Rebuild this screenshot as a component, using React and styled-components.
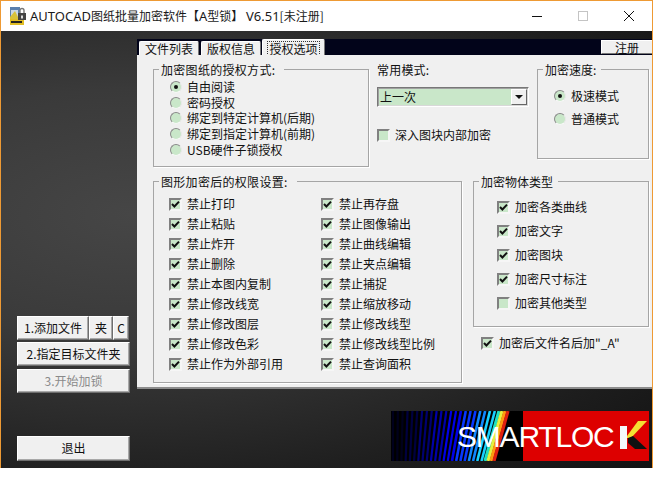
import React from "react";
import styled, { createGlobalStyle } from "styled-components";

const Global = createGlobalStyle`
  html, body { margin: 0; padding: 0; background: #fff; }
  body { font-family: "Noto Sans CJK SC", "Liberation Sans", sans-serif; font-size: 12px; color: #111; }
  * { box-sizing: border-box; }
`;

const Win = styled.div`
  width: 653px; height: 468px;
  border: 1px solid #ee9a34; border-bottom: 0;
  display: flex; flex-direction: column;
`;
const TitleBar = styled.div`
  height: 30px; flex: none; background: #fff;
  display: flex; align-items: center; padding-left: 9px;
`;
const TitleText = styled.span`
  margin-left: 4px; font-size: 12px; line-height: 30px; color: #1a1a1a; white-space: nowrap; flex: 1;
`;
const Latin = styled.span`
  font-family: "Noto Sans", "Liberation Sans", sans-serif; font-size: 13px;
`;
const Caps = styled.div`display: flex; align-items: center;`;
const Cap = styled.div`
  width: 46px; height: 30px; display: flex; align-items: center; justify-content: center;
`;

const Client = styled.div`
  flex: 1; display: flex;
  background: radial-gradient(ellipse at 20% 42%, #464646 0%, #3a3a3a 35%, #1f1f1f 75%, #121212 100%);
`;
const Side = styled.div`
  width: 136px; flex: none; padding: 285px 7px 0 16px;
  display: flex; flex-direction: column;
`;
const Main = styled.div`flex: 1; display: flex; flex-direction: column; padding-top: 8px;`;

const Btn = styled.div`
  height: ${p => p.$h || 24}px; flex: ${p => p.$flex || 1};
  background: #f0f0f0; display: flex; align-items: center; justify-content: center;
  border: 1px solid; border-color: #fff #6e6e6e #6e6e6e #fff;
  box-shadow: inset -1px -1px 0 #a8a8a8;
  padding-bottom: 2px;
  color: ${p => p.$off ? "#8a8a8a" : "#111"}; font-size: 12px; white-space: nowrap;
`;
const BtnRow = styled.div`display: flex; margin-bottom: ${p => p.$mb ?? 2}px; margin-top: ${p => p.$mt || 0}px;`;

const TabStrip = styled.div`
  height: 16px; background: #02041a; display: flex; justify-content: space-between; align-items: flex-end;
  padding-left: 2px;
`;
const Tabs = styled.div`display: flex; align-items: flex-end;`;
const Tab = styled.div`
  height: ${p => p.$on ? 16 : 14}px; width: ${p => p.$w}px; margin-left: ${p => p.$ml || 0}px;
  background: #f0f0f0;
  border-top: 1px solid #fff; border-left: 1px solid #fff; border-right: 1px solid #777;
  border-radius: 2px 2px 0 0;
  display: flex; justify-content: center; font-size: 12px; line-height: 13px;
  span { display: block; height: 13px; ${p => p.$on ? "outline: 1px dotted #333; margin-top: 2px; padding: 0 1px;" : ""} }
`;
const Reg = styled.div`
  width: 51px; height: 14px; margin-bottom: 1px; background: #f0f0f0; display: flex; align-items: center; justify-content: center;
  border-top: 1px solid #fff; border-left: 1px solid #fff; border-bottom: 1px solid #777; font-size: 12px; line-height: 13px;
`;
const Panel = styled.div`
  height: 334px; width: 515px; background: #f0f0f0;
  border-bottom: 2px solid #8c8c8c;
  padding: 6px 4px 0 16px;
  display: flex; flex-direction: column;
`;
const Row = styled.div`display: flex; align-items: flex-start; margin-top: ${p => p.$mt || 0}px;`;

const Field = styled.fieldset`
  margin: 0 ${p => p.$mr || 0}px 0 0; padding: 0; min-width: 0;
  width: ${p => p.$w}px; height: ${p => p.$h}px; flex: none;
  border: 1px solid #a5a5a5;
  box-shadow: 1px 1px 0 #fff;
`;
const Legend = styled.legend`
  padding: 2px ${p => p.$pr ?? 2}px 0 2px; margin-left: 5px; font-size: 12px; line-height: 14px;
  letter-spacing: ${p => p.$ls || 0}px;
`;
const Stack = styled.div`
  display: flex; flex-direction: column; gap: ${p => p.$gap}px;
  padding-top: ${p => p.$pt || 0}px; padding-left: ${p => p.$pl || 0}px;
  width: ${p => p.$w ? `${p.$w}px` : "auto"};
`;
const Opt = styled.div`
  display: flex; align-items: center; height: ${p => p.$h || 16}px; gap: 5px;
  white-space: nowrap; font-size: 12px; line-height: 16px;
`;
const RadioDot = styled.span`
  width: 12px; height: 12px; border-radius: 50%; flex: none;
  background: #c9e7c9;
  border: 1px solid; border-color: #8a8a8a #e8e8e8 #f8f8f8 #8a8a8a;
  display: flex; align-items: center; justify-content: center;
  &::after { content: ""; width: 4px; height: 4px; border-radius: 50%; background: ${p => p.$on ? "#111" : "transparent"}; }
`;
const Box = styled.span`
  width: 13px; height: 13px; flex: none; display: block;
  background: #c9e7c9;
  border: 2px solid; border-color: #808080 #f6f6f6 #f6f6f6 #808080;
`;
const TickMark = styled.svg`display: block;`;

const Tick = () => (
  <TickMark width="9" height="9" viewBox="0 0 9 9">
    <path d="M1 4 L3.4 6.5 L8 1.6" fill="none" stroke="#111" strokeWidth="2" />
  </TickMark>
);

const CheckItem = ({ children, on = true, h = 20 }) => (
  <Opt $h={h}>
    <Box>{on && <Tick />}</Box>
    <span>{children}</span>
  </Opt>
);
const RadioItem = ({ children, on, h = 16 }) => (
  <Opt $h={h}>
    <RadioDot $on={on} />
    <span>{children}</span>
  </Opt>
);

const Mid = styled.div`width: 160px; flex: none;`;
const MidLabel = styled.div`height: 26px; padding-top: 1px; line-height: 16px; font-size: 12px; letter-spacing: 0.2px;`;
const Select = styled.div`
  width: 152px; height: 20px; background: #c9e7c9; display: flex; align-items: stretch;
  border: 1px solid; border-color: #777 #fff #fff #777;
  box-shadow: inset 1px 1px 0 #a0a0a0, inset -1px -1px 0 #d8d8d8;
`;
const SelectText = styled.div`flex: 1; padding-left: 2px; line-height: 18px; font-size: 12px;`;
const SelectBtn = styled.div`
  width: 16px; margin: 1px; background: #f0f0f0; display: flex; align-items: center; justify-content: center;
  border: 1px solid; border-color: #fff #666 #666 #fff;
  &::after { content: ""; border: 4px solid transparent; border-top: 4px solid #111; border-bottom: 0; }
`;
const Spacer = styled.div`height: ${p => p.$h}px;`;
const Cols = styled.div`display: flex;`;
const Tail = styled.div`padding-left: 8px;`;

const LogoRow = styled.div`
  display: flex; padding: 22px 0 0 254px;
`;
const Logo = styled.div`
  width: 258px; height: 50px; display: flex; position: relative; overflow: hidden;
`;
const LogoLeft = styled.div`
  width: 132px; height: 50px;
  svg { display: block; background: #000; }
`;
const LogoRight = styled.div`flex: 1; background: #dd0000;`;
const LogoText = styled.div`
  position: absolute; left: 66px; top: 1px; height: 50px; line-height: 50px;
  font-family: "Liberation Sans", sans-serif; font-size: 30px; color: #fff; letter-spacing: -1.2px;
  white-space: nowrap;
`;
const LogoK = styled.svg`position: absolute; left: 228px; top: 0;`;

const stripeColor = i => {
  if (i < 3) return "#00001c";
  if (i < 6) return "#000040";
  if (i < 9) return "#000070";
  if (i < 12) return "#0000a8";
  if (i < 15) return "#0000e8";
  if (i < 18) return "#0838ff";
  if (i < 20) return "#1088ff";
  return "#18d0ff";
};

const Wave = () => {
  const stripes = [];
  for (let i = 0; i < 22; i++) {
    const x = 2 + i * 4.85;
    const slope = 14 * (i / 22);
    stripes.push(
      <line key={i} x1={x} y1="0" x2={x - slope} y2="50" stroke={stripeColor(i)} strokeWidth={i < 14 ? 2.2 : 2.6} />
    );
  }
  const rainbow = [[108, "#20e0c0"], [111, "#e4f040"], [114, "#ff9a10"], [117, "#e02010"]];
  return (
    <svg width="132" height="50" viewBox="0 0 132 50">
      {stripes}
      {rainbow.map(([x, c]) => (
        <line key={x} x1={x} y1="0" x2={x - 14} y2="50" stroke={c} strokeWidth="3.2" />
      ))}
    </svg>
  );
};

const left = ["禁止打印","禁止粘贴","禁止炸开","禁止删除","禁止本图内复制","禁止修改线宽","禁止修改图层","禁止修改色彩","禁止作为外部引用"];
const right = ["禁止再存盘","禁止图像输出","禁止曲线编辑","禁止夹点编辑","禁止捕捉","禁止缩放移动","禁止修改线型","禁止修改线型比例","禁止查询面积"];

export default function App() {
  return (
    <Win>
      <Global />
      <TitleBar>
        <svg width="16" height="18" viewBox="0 0 16 18">
          <rect x="0" y="0" width="10" height="12" fill="#5a7fae" />
          <rect x="1" y="3" width="7" height="8" fill="#c9d6e4" />
          <path d="M0 10 L5 4 L9 12 L0 12Z" fill="#d8c23a" />
          <rect x="0" y="12" width="14" height="6" fill="#e0bd24" />
          <rect x="8" y="6" width="8" height="7" fill="#444" />
          <path d="M10 6 V3.5 a2 2 0 0 1 4 0 V6" fill="none" stroke="#777" strokeWidth="1.4" />
          <rect x="11" y="8.5" width="2" height="3" fill="#ddd" />
          <rect x="1" y="14" width="11" height="2" fill="#222" />
        </svg>
        <TitleText><Latin>AUTOCAD</Latin>图纸批量加密软件【<Latin>A</Latin>型锁】 <Latin>V6.51</Latin>[未注册]</TitleText>
        <Caps>
          <Cap><svg width="10" height="10"><path d="M0 5.5H10" stroke="#111" /></svg></Cap>
          <Cap><svg width="10" height="10"><rect x=".5" y=".5" width="9" height="9" fill="none" stroke="#c4c4c4" /></svg></Cap>
          <Cap><svg width="10" height="10"><path d="M0 0L10 10M10 0L0 10" stroke="#111" /></svg></Cap>
        </Caps>
      </TitleBar>
      <Client>
        <Side>
          <BtnRow>
            <Btn $flex="0 0 72px">1.添加文件</Btn>
            <Btn $flex="0 0 24px">夹</Btn>
            <Btn $flex="0 0 16px">C</Btn>
          </BtnRow>
          <BtnRow $mb={3}><Btn>2.指定目标文件夹</Btn></BtnRow>
          <BtnRow><Btn $off>3.开始加锁</Btn></BtnRow>
          <BtnRow $mt={41}><Btn $h={25}>退出</Btn></BtnRow>
        </Side>
        <Main>
          <TabStrip>
            <Tabs>
              <Tab $w={60}><span>文件列表</span></Tab>
              <Tab $w={60} $ml={2}><span>版权信息</span></Tab>
              <Tab $w={63} $ml={1} $on><span>授权选项</span></Tab>
            </Tabs>
            <Reg>注册</Reg>
          </TabStrip>
          <Panel>
            <Row>
              <Field $w={216} $h={106} $mr={8}>
                <Legend $ls={0.3} $pr={9}>加密图纸的授权方式:</Legend>
                <Stack $gap={0} $pt={2} $pl={16}>
                  <RadioItem on h={15.75}>自由阅读</RadioItem>
                  <RadioItem h={15.75}>密码授权</RadioItem>
                  <RadioItem h={15.75}>绑定到特定计算机(后期)</RadioItem>
                  <RadioItem h={15.75}>绑定到指定计算机(前期)</RadioItem>
                  <RadioItem h={15.75}>USB硬件子锁授权</RadioItem>
                </Stack>
              </Field>
              <Mid>
                <MidLabel>常用模式:</MidLabel>
                <Select><SelectText>上一次</SelectText><SelectBtn /></Select>
                <Spacer $h={18} />
                <CheckItem on={false}>深入图块内部加密</CheckItem>
              </Mid>
              <Field $w={112} $h={98}>
                <Legend $pr={5}>加密速度:</Legend>
                <Stack $gap={7} $pt={11} $pl={16}>
                  <RadioItem on>极速模式</RadioItem>
                  <RadioItem>普通模式</RadioItem>
                </Stack>
              </Field>
            </Row>
            <Row $mt={6}>
              <Field $w={309} $h={210} $mr={11}>
                <Legend $ls={0.3} $pr={9}>图形加密后的权限设置:</Legend>
                <Cols>
                  <Stack $gap={0} $pt={5} $pl={15} $w={167}>
                    {left.map(t => <CheckItem key={t}>{t}</CheckItem>)}
                  </Stack>
                  <Stack $gap={0} $pt={5}>
                    {right.map(t => <CheckItem key={t}>{t}</CheckItem>)}
                  </Stack>
                </Cols>
              </Field>
              <div>
                <Field $w={176} $h={154}>
                  <Legend $pr={5}>加密物体类型</Legend>
                  <Stack $gap={4} $pt={8} $pl={23}>
                    <CheckItem>加密各类曲线</CheckItem>
                    <CheckItem>加密文字</CheckItem>
                    <CheckItem>加密图块</CheckItem>
                    <CheckItem>加密尺寸标注</CheckItem>
                    <CheckItem on={false}>加密其他类型</CheckItem>
                  </Stack>
                </Field>
                <Spacer $h={6} />
                <Tail>
                  <CheckItem>加密后文件名后加"_A"</CheckItem>
                </Tail>
              </div>
            </Row>
          </Panel>
          <LogoRow>
            <Logo>
              <LogoLeft><Wave /></LogoLeft>
              <LogoRight />
              <LogoText>SMARTLOC</LogoText>
              <LogoK width="30" height="50" viewBox="0 0 30 50">
                <path d="M8 25 L19 10 L28 10 L12 27 L8 27Z" fill="#f4e033" />
                <path d="M9 27 L14 25 L28 38 L16 38 L9 32Z" fill="#111" />
                <rect x="1" y="15" width="7" height="23" fill="#f4f8fa" />
              </LogoK>
            </Logo>
          </LogoRow>
        </Main>
      </Client>
    </Win>
  );
}
